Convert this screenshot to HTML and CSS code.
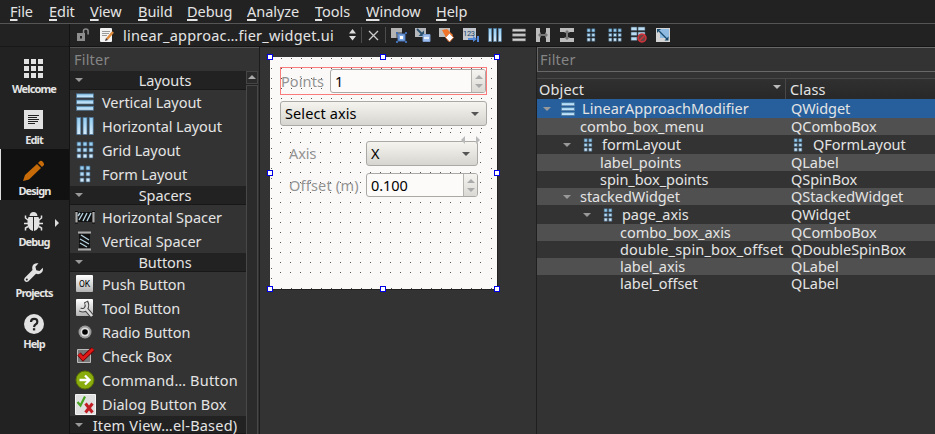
FILE: index.html
```html
<!DOCTYPE html>
<html lang="en">
<head>
<meta charset="utf-8">
<title>Designer</title>
<link rel="stylesheet" href="styles.css">
</head>
<body>
<svg class="defs" aria-hidden="true">
  <defs>
    <linearGradient id="blue" x1="0" y1="0" x2="0" y2="1"><stop offset="0" stop-color="#8fcbf0"/><stop offset="1" stop-color="#d8ecfa"/></linearGradient>
    <linearGradient id="btn" x1="0" y1="0" x2="0" y2="1"><stop offset="0" stop-color="#fff"/><stop offset="1" stop-color="#b4b4b4"/></linearGradient>
    <pattern id="dots" width="10" height="10" patternUnits="userSpaceOnUse"><rect x="1" y="1" width="1" height="1" fill="#555"/></pattern>
    <symbol id="vbox" viewBox="0 0 18 18"><g fill="url(#blue)" stroke="#4a7396" stroke-width=".8"><rect x=".5" y=".8" width="17" height="4"/><rect x=".5" y="7" width="17" height="4"/><rect x=".5" y="13.2" width="17" height="4"/></g></symbol>
    <symbol id="hbox" viewBox="0 0 18 18"><g fill="url(#blue)" stroke="#4a7396" stroke-width=".8"><rect x=".8" y=".5" width="4" height="17"/><rect x="7" y=".5" width="4" height="17"/><rect x="13.2" y=".5" width="4" height="17"/></g></symbol>
    <symbol id="grid" viewBox="0 0 18 18"><g fill="url(#blue)" stroke="#3f617d" stroke-width=".8"><path d="M1 1h4v4H1zM7 1h4v4H7zM13 1h4v4h-4zM1 7h4v4H1zM7 7h4v4H7zM13 7h4v4h-4zM1 13h4v4H1zM7 13h4v4H7zM13 13h4v4h-4z"/></g></symbol>
    <symbol id="form" viewBox="0 0 18 18"><g fill="url(#blue)" stroke="#3f617d" stroke-width=".8"><path d="M4 1h4v4H4zM10 1h4v4h-4zM4 7h4v4H4zM10 7h4v4h-4zM4 13h4v4H4zM10 13h4v4h-4z"/></g></symbol>
  </defs>
</svg>
<div class="app">
  <nav class="menubar">
    <span><u>F</u>ile</span><span><u>E</u>dit</span><span><u>V</u>iew</span><span><u>B</u>uild</span><span><u>D</u>ebug</span><span><u>A</u>nalyze</span><span><u>T</u>ools</span><span><u>W</u>indow</span><span><u>H</u>elp</span>
  </nav>
  <div class="main">
    <aside class="modes">
      <div class="modes-top"></div>
      <div class="mode"><svg width="20" height="20"><path fill="#e2e2e2" d="M0 0h5v5H0zM7 0h5v5H7zM14 0h5v5h-5zM0 7h5v5H0zM7 7h5v5H7zM14 7h5v5h-5zM0 14h5v5H0zM7 14h5v5H7zM14 14h5v5h-5z"/></svg><b>Welcome</b></div>
      <div class="mode"><svg width="20" height="20"><path fill="#e2e2e2" d="M0 0h19v19H0z"/><path stroke="#222" d="M4 5.500h11M4 7.500h9M4 9.500h11M4 11.500h10M4 13.500h7"/></svg><b>Edit</b></div>
      <div class="mode active"><svg width="20" height="20"><path fill="#c76a08" d="M13 3l4 4L5 18.500l-6 1.500 2-6zM14 2l2-2q1.500-.8 3 1t1 3l-2 2z"/></svg><b>Design</b></div>
      <div class="mode"><svg width="20" height="20"><path fill="#e2e2e2" d="M5.500 4Q6 0 9.500 0T13.500 4z"/><path fill="#e2e2e2" d="M4.500 5H9v14Q3.500 17.500 3.500 11 3.500 7 4.500 5zM10 5h4.500q1 2 1 6 0 6.500-5.500 8z"/><path fill="none" stroke="#e2e2e2" stroke-width="1.500" d="M4 8L1.500 6V3.500M15 8l2.500-2V3.500M4 11.500H0M15 11.500h4M4 14.500l-2.500 1.500v2.500M15 14.500l2.500 1.500v2.500"/></svg><b>Debug</b><i class="expand"></i></div>
      <div class="mode"><svg width="20" height="20"><path fill="#e2e2e2" d="M14.500.3Q10-.5 8.500 3q-.7 2 0 4L.8 14.700q-1.600 2 .1 3.600t3.600 0L12 10.800q4 1.200 6.200-1.800 1.200-2 .7-4.300L15.500 8l-3.200-.8-.9-3.400z"/><circle cx="2.800" cy="16.500" r="1" fill="#222"/></svg><b>Projects</b></div>
      <div class="mode"><svg width="20" height="20"><circle cx="10" cy="10" r="10" fill="#e2e2e2"/><path fill="none" stroke="#222" stroke-width="2.200" d="M7 8q0-3.200 3.200-3.200T13.300 8q0 1.500-1.500 2.300T10 13"/><path fill="#222" d="M8.900 14.200h2.300v2.200H8.900z"/></svg><b>Help</b></div>
    </aside>
    <section class="work">
      <div class="toolbar">
        <svg class="lock" width="14" height="14"><path fill="#8d8d8d" d="M1 5h8v8H1z"/><path fill="none" stroke="#8d8d8d" stroke-width="1.500" d="M7.500 5V3q0-2 2.300-2t2.300 2v3.500"/><path fill="#222" d="M4 8h2v2.500H4z"/></svg>
        <svg class="doc" width="16" height="16"><rect x="1" y="1" width="12" height="14" rx="1" fill="#f2f2f2"/><path stroke="#999" d="M3 4.500h8M3 6.500h7M3 8.500h5"/><path stroke="#e08a3a" stroke-width="2.400" d="M14 5l-6 7"/><path fill="#433" d="M7 11l2 2-3 1z"/></svg>
        <span class="file">linear_approac…fier_widget.ui</span>
        <svg class="updown" width="9" height="12"><path fill="#ddd" d="M4.500 0L8 4.500H1zM4.500 11.500L8 7H1z"/></svg>
        <i class="sep"></i>
        <svg class="close" width="11" height="11"><path stroke="#ccc" stroke-width="1.300" d="M1 1l9 9M10 1l-9 9"/></svg>
        <i class="sep"></i>
        <div class="tools">
          <svg width="16" height="16"><path fill="#b4b4b4" d="M0 1h11v10H0z"/><path fill="#777" d="M5 5h6v6H5z"/><path fill="#7ba7e3" stroke="#4d79bd" d="M7 7h7v7H7z"/><path fill="#fff" d="M9 9h3v3H9z"/><path fill="#3f6dae" d="M5 5h2v2H5zM14 5h2v2h-2zM5 14h2v2H5zM14 14h2v2h-2z"/></svg>
          <svg width="16" height="16"><path fill="#b4b8bc" d="M0 1h11v9H0z"/><path stroke="#28506f" stroke-width="1.800" d="M2 2l5 5"/><path fill="#28506f" d="M9 3.500v5.500H3.500z"/><path fill="#9fc0ef" stroke="#7899ca" d="M8 7.500h7v7H8z"/><path stroke="#fff" stroke-width="1.500" d="M9 11h5"/></svg>
          <svg width="16" height="16"><path fill="#bdbdbd" d="M0 1h11v9H0z"/><path fill="#f07528" d="M3 3l5-1 6 6-5 6z"/><path fill="#fff" stroke="#e5773c" d="M10.500 6l4 4.500-4 4.500-4-4.500z"/></svg>
          <svg width="16" height="16"><path fill="#c4c8ce" d="M0 1h13v12H0z"/><text x="0" y="9" font-family="Roboto" font-size="7.500" letter-spacing="-.3" fill="#16436d">123</text><path stroke="#5188d8" stroke-width="2" d="M5 12h6M15 9v6"/><path fill="#5188d8" d="M10 9l4 3-4 3z"/></svg>
          <svg width="14" height="14"><use href="#hbox"/></svg>
          <svg width="14" height="14"><path fill="#d0d0d0" stroke="#777" stroke-width=".6" d="M.5 1h13v2.500H.5zM.5 5.700h13v2.500H.5zM.5 10.500h13V13H.5z"/></svg>
          <svg width="14" height="14"><path fill="#bcbcbc" d="M0 0h4v14H0zM10 0h4v14h-4z"/><path fill="#777" d="M2 7l3-3v2h4V4l3 3-3 3V8H5v2z"/></svg>
          <svg width="14" height="14"><path fill="#bcbcbc" d="M0 0h14v4H0zM0 10h14v4H0z"/><path fill="#777" d="M7 2l3 3H8v4h2l-3 3-3-3h2V5H4z"/></svg>
          <svg width="14" height="14"><use href="#form"/></svg>
          <svg width="14" height="14"><use href="#grid"/></svg>
          <svg width="16" height="16"><path fill="#b9dcf3" stroke="#456" stroke-width=".6" d="M0 0h6v3.500H0zM7 0h7v3.500H7zM0 5h6v3.500H0zM7 5h7v3.500H7zM0 10h6v3.500H0z"/><circle cx="11" cy="11" r="4" fill="#694444" stroke="#d3333b" stroke-width="1.500"/><path stroke="#d3333b" stroke-width="1.500" d="M8 14l6-6"/></svg>
          <svg width="16" height="16"><path fill="#d4d4d4" d="M1 1h14v14H1z"/><path fill="#8fbbe2" d="M5 2h9v9H5z"/><path stroke="#174a6d" stroke-width="1.300" d="M4 4l8 8"/><path fill="#174a6d" d="M2 2h4L2 6zM13.500 13.500v-4l-4 4z"/></svg>
        </div>
      </div>
      <div class="panes">
        <div class="widgetbox">
          <div class="filter">Filter</div>
          <div class="boxbody">
            <div class="list">
              <h2>Layouts</h2>
              <ul>
                <li><svg width="18" height="18"><use href="#vbox"/></svg><span>Vertical Layout</span></li>
                <li><svg width="18" height="18"><use href="#hbox"/></svg><span>Horizontal Layout</span></li>
                <li><svg width="18" height="18"><use href="#grid"/></svg><span>Grid Layout</span></li>
                <li><svg width="18" height="18"><use href="#form"/></svg><span>Form Layout</span></li>
              </ul>
              <h2>Spacers</h2>
              <ul>
                <li><svg width="20" height="20"><path stroke="#aaa" stroke-width="2" d="M1.500 4v12M18.500 4v12"/><path stroke="#080808" d="M0 4.500h3M17 4.500h3M0 16h3M17 16h3"/><path fill="#111" d="M3 5h14v10H3z"/><path stroke="#b4d0df" stroke-width="1.400" d="M4 13l4-7M8 14l4-8M12 14l4-8M3 9l2-3"/></svg><span>Horizontal Spacer</span></li>
                <li><svg width="20" height="20"><path stroke="#aaa" stroke-width="2" d="M3 1.500h13M3 18.500h13"/><path fill="#111" d="M4 3h11v14H4z"/><path stroke="#b4d0df" stroke-width="1.400" d="M6 4l8 5M5 8l9 5M5 12l7 4"/></svg><span>Vertical Spacer</span></li>
              </ul>
              <h2>Buttons</h2>
              <ul>
                <li><svg width="20" height="20"><rect x="1" y="1" width="17" height="17" rx="1" fill="url(#btn)"/><text x="4" y="13" font-family="Roboto" font-size="8.500" letter-spacing="0" fill="#000">OK</text></svg><span>Push Button</span></li>
                <li><svg width="20" height="20"><rect x="1" y="1" width="17" height="17" rx="1" fill="url(#btn)"/><path fill="none" stroke="#444" stroke-width="4.500" d="M5 11.500q4 2 6-1t0-7M11 11l6 7"/><path fill="none" stroke="#ddd" stroke-width="2.500" d="M5 11.500q4 2 6-1t0-6M11 11l6 7"/></svg><span>Tool Button</span></li>
                <li><svg width="20" height="20"><circle cx="10" cy="10" r="6.500" fill="#999"/><circle cx="10" cy="10" r="4.500" fill="#ddd"/><circle cx="10" cy="10" r="2.800" fill="#000"/></svg><span>Radio Button</span></li>
                <li><svg width="20" height="20"><path fill="#777" stroke="#bbb" d="M2.500 3.500h13v13h-13z"/><path fill="none" stroke="#600" stroke-width="4.500" d="M4 8l4 4.500L18 3"/><path fill="none" stroke="#e01818" stroke-width="3" d="M4 8l4 4.500L18 3"/></svg><span>Check Box</span></li>
                <li><svg width="20" height="20"><circle cx="10" cy="10" r="9" fill="#8aac0c" stroke="#5d7700"/><path fill="none" stroke="#fff" stroke-width="2.300" d="M4.500 10h10M10 5.500l4.500 4.500-4.500 4.500"/></svg><span class="wide">Command… Button</span></li>
                <li><svg width="21" height="21"><path fill="#e0e0e0" stroke="#f4f4f4" d="M.5.500h20v20H.5z"/><path fill="none" stroke="#48a421" stroke-width="2.200" d="M2.500 8l3 3.500L10 2.500"/><path stroke="#c01d25" stroke-width="3" d="M10.500 9.500l7 9M17.500 9.500l-7 9"/></svg><span>Dialog Button Box</span></li>
              </ul>
              <h2 class="last">Item View…el-Based)</h2>
            </div>
            <div class="scroll"><div class="up"></div><div class="thumb"></div></div>
          </div>
        </div>
        <div class="canvas">
          <div class="sheet">
            <svg class="dots" width="227" height="232"><rect width="227" height="232" fill="url(#dots)"/></svg>
            <div class="row"><label>Points</label><div class="spin"><span>1</span><i></i></div></div>
            <div class="combo">Select axis</div>
            <div class="page">
              <svg class="dots" width="207" height="148"><rect width="207" height="148" fill="url(#dots)"/></svg>
              <label>Axis</label><div class="combo">X</div>
              <label class="off">Offset (m)</label><div class="spin"><span>0.100</span><i></i></div>
              <svg class="pager" width="20" height="8"><path fill="#b9b9b9" d="M0 4l4-4v8zM19 4l-4-4v8z"/></svg>
            </div>
            <b class="h nw"></b><b class="h n"></b><b class="h ne"></b><b class="h w"></b><b class="h e"></b><b class="h sw"></b><b class="h s"></b><b class="h se"></b>
          </div>
        </div>
        <div class="inspector">
          <div class="filter">Filter</div>
          <div class="tree">
            <div class="tr head"><div>Object</div><div>Class</div></div>
            <div class="tr tall sel"><div class="d0"><i class="arrow"></i><svg width="14" height="14"><use href="#vbox"/></svg><span>LinearApproachModifier</span></div><div>QWidget</div></div>
            <div class="tr alt"><div class="d1">combo_box_menu</div><div>QComboBox</div></div>
            <div class="tr tall"><div class="d2"><i class="arrow"></i><svg width="14" height="14"><use href="#form"/></svg><span>formLayout</span></div><div class="ci"><svg width="14" height="14"><use href="#form"/></svg><span>QFormLayout</span></div></div>
            <div class="tr alt"><div class="d3">label_points</div><div>QLabel</div></div>
            <div class="tr"><div class="d3">spin_box_points</div><div>QSpinBox</div></div>
            <div class="tr alt"><div class="d2"><i class="arrow tight"></i>stackedWidget</div><div>QStackedWidget</div></div>
            <div class="tr tall"><div class="d4"><i class="arrow"></i><svg width="14" height="14"><use href="#form"/></svg><span>page_axis</span></div><div>QWidget</div></div>
            <div class="tr alt"><div class="d5">combo_box_axis</div><div>QComboBox</div></div>
            <div class="tr"><div class="d5 long">double_spin_box_offset</div><div>QDoubleSpinBox</div></div>
            <div class="tr alt"><div class="d5">label_axis</div><div>QLabel</div></div>
            <div class="tr"><div class="d5">label_offset</div><div>QLabel</div></div>
          </div>
        </div>
      </div>
    </section>
  </div>
</div>
</body>
</html>
```
FILE: styles.css
```css
* { box-sizing: border-box; }
body { margin: 0; background: #333; color: #e4e4e4; font: 14.5px/17px "Noto Sans", sans-serif; letter-spacing: -0.05px; overflow: hidden; white-space: nowrap; }
svg { display: block; flex: none; overflow: visible; }
.defs { position: absolute; width: 0; height: 0; }
.app { width: 935px; height: 434px; display: flex; flex-direction: column; overflow: hidden; }
.menubar { height: 24px; flex: none; display: flex; padding-left: 10px; line-height: 23px; background: #222; border-bottom: 1px solid #555; }
.menubar span { width: 39px; flex: none; }
.menubar span:nth-child(2) { width: 41px; }
.menubar span:nth-child(3) { width: 48px; }
.menubar span:nth-child(4) { width: 49px; }
.menubar span:nth-child(5) { width: 60px; }
.menubar span:nth-child(6) { width: 68px; }
.menubar span:nth-child(7) { width: 51px; }
.menubar span:nth-child(8) { width: 70px; }
.menubar u { text-decoration-thickness: 1.5px; text-underline-offset: 2px; text-decoration-skip-ink: none; }
.main { flex: 1; display: flex; min-height: 0; }
.modes { width: 70px; flex: none; background: #222; border-right: 1px solid #141414; }
.modes-top { height: 23px; border-bottom: 1px solid #181818; }
.mode { height: 51px; padding: 12px 2px 0 0; position: relative; display: flex; flex-direction: column; align-items: center; }
.mode b { font-size: 11px; line-height: 14px; margin-top: 3px; letter-spacing: -0.9px; padding-left: 1px; }
.mode.active { background: #111; border-left: 1px solid #ddd; }
.expand { position: absolute; left: 55px; top: 19px; border-left: 4px solid #ddd; border-top: 4px solid transparent; border-bottom: 4px solid transparent; }
.work { flex: 1; min-width: 0; display: flex; flex-direction: column; }
.toolbar { height: 23px; flex: none; display: flex; align-items: center; background: #222; border-bottom: 1px solid #141414; }
.lock { margin-left: 6px; }
.doc { margin-left: 9px; }
.file { width: 225px; margin-left: 8px; letter-spacing: 0.22px; }
.updown { margin-right: 4px; }
.sep { width: 1px; height: 16px; background: #4c4c4c; }
.close { margin: 0 6px; }
.tools { display: flex; margin-left: 1px; }
.tools svg { margin: 0 4px; }
.tools svg[width="14"] { margin: 1px 5px; }
.panes { flex: 1; display: flex; min-height: 0; }
.widgetbox { width: 190px; flex: none; display: flex; flex-direction: column; border-right: 1px solid #1c1c1c; }
.filter { height: 24px; flex: none; padding-left: 4px; line-height: 23px; letter-spacing: 0.2px; color: #858585; border-top: 1px solid #555; background: #333; }
.boxbody { display: flex; flex: 1; min-height: 0; }
.list { width: 176px; overflow: hidden; }
h2 { position: relative; height: 19px; margin: 0; font: inherit; line-height: 19px; text-align: center; padding-left: 14px; background: #222; border-bottom: 1px solid #181818; }
h2::before { content: ""; position: absolute; left: 5px; top: 7px; border-top: 4px solid #999; border-left: 4px solid transparent; border-right: 4px solid transparent; }
h2.last { height: 18px; padding-left: 14px; letter-spacing: 0.2px; }
ul { list-style: none; margin: 0; padding: 0; }
li { height: 24px; display: flex; align-items: center; padding-left: 5px; }
li svg[width="18"] { margin-left: 1px; }
li span { margin-left: 7px; }
li span.wide { letter-spacing: 0.2px; }
li svg[width="18"] + span { margin-left: 8px; }
li svg[width="21"] + span { margin-left: 6px; letter-spacing: 0.05px; }
.scroll { width: 12px; background: #222; }
.up { height: 13px; border: 1px solid #454545; background: #2b2b2b; position: relative; }
.up::after { content: ""; position: absolute; left: 1px; top: 3px; border-bottom: 4px solid #aaa; border-left: 4px solid transparent; border-right: 4px solid transparent; }
.thumb { margin-top: 1px; height: 352px; border: 1px solid #484848; background: #2b2b2b; }
.canvas { width: 277px; flex: none; padding: 10px; border-right: 1px solid #1f1f1f; }
.sheet { position: relative; width: 227px; height: 232px; padding: 10px 10px 0; background: #faf9f8; box-shadow: 1px 1px 0 #222; color: #111; }
.dots { position: absolute; left: 0; top: 0; }
.row { position: relative; width: 207px; height: 28px; display: flex; align-items: center; border: 1px solid #fa7b7b; }
.row label { width: 49px; letter-spacing: 0.1px; }
label { color: #939393; position: relative; }
label.off { letter-spacing: 0.2px; }
.spin { position: relative; height: 24px; width: 156px; border: 1px solid #aaa9a5; border-radius: 3px; background: #fcfbfa; padding: 0 4px; line-height: 22px; color: #000; }
.spin i { position: absolute; right: 0; top: 0; width: 14px; height: 22px; border-left: 1px solid #b5b4b0; background: linear-gradient(#f5f4f0, #dad9d4); border-radius: 0 2px 2px 0; }
.spin i::before, .spin i::after { content: ""; position: absolute; left: 3px; border-left: 4px solid transparent; border-right: 4px solid transparent; }
.spin i::before { top: 5px; border-bottom: 4px solid #aaa; }
.spin i::after { bottom: 4px; border-top: 4px solid #aaa; }
.combo { position: relative; height: 25px; margin-top: 6px; border: 1px solid #aaa9a5; border-radius: 3px; background: linear-gradient(#f5f4ef, #d6d5cf); padding-left: 4px; line-height: 23px; color: #000; letter-spacing: 0.1px; }
.combo::after { content: ""; position: absolute; right: 7px; top: 10px; border-top: 4px solid #555; border-left: 4px solid transparent; border-right: 4px solid transparent; }
.page { position: relative; width: 207px; height: 149px; margin: 5px 0 0 -1px; padding: 10px 8px 0 10px; background: #faf9f8; display: grid; grid-template-columns: 77px 112px; grid-template-rows: 25px 24px; row-gap: 7px; align-items: center; align-content: start; }
.page .combo { margin: 0; }
.page .spin { width: 112px; }
.pager { position: absolute; left: 182px; top: 5px; }
.h { position: absolute; width: 6px; height: 6px; border: 1px solid #0000e6; background: #fff; }
.nw, .n, .ne { top: -3px; }
.w, .e { top: 113px; }
.sw, .s, .se { top: 229px; }
.nw, .w, .sw { left: -3px; }
.n, .s { left: 110px; }
.ne, .e, .se { left: 224px; }
.inspector { flex: 1; min-width: 0; }
.inspector .filter { height: 25px; border: 1px solid #686868; border-right: 0; padding-left: 2px; }
.tree { margin-top: 6px; }
.tr { display: flex; height: 17px; line-height: 17px; }
.tr > div { width: 254px; padding-right: 0; display: flex; align-items: center; flex: none; }
.tr > div + div { width: 144px; }
.tall { height: 19px; }
.alt { background: #505050; }
.sel { background: #265f9c; }
.head { height: 21px; background: linear-gradient(#303030, #282828); border-top: 1px solid #484848; }
.head > div { padding-left: 2px; position: relative; letter-spacing: 0.15px; }
.head > div:first-child { width: 249px; margin-right: 4px; border-right: 1px solid #484848; }
.head > div:first-child::after { content: ""; position: absolute; right: 4px; top: 6px; border-top: 4px solid #bbb; border-left: 4px solid transparent; border-right: 4px solid transparent; }
.head > div + div { padding-left: 0; }
.arrow { width: 8px; border-top: 4px solid #999; border-left: 4px solid transparent; border-right: 4px solid transparent; margin-right: 10px; flex: none; }
.arrow.tight { margin-right: 9px; }
.tree svg { margin-right: 7px; }
.tree .ci svg { margin-right: 8px; }
.long { letter-spacing: 0.18px; }
.d0 { padding-left: 6px; letter-spacing: 0.05px; }
.d1 { padding-left: 43px; }
.d2 { padding-left: 26px; }
.d3 { padding-left: 63px; }
.d4 { padding-left: 46px; }
.d5 { padding-left: 83px; }
```
